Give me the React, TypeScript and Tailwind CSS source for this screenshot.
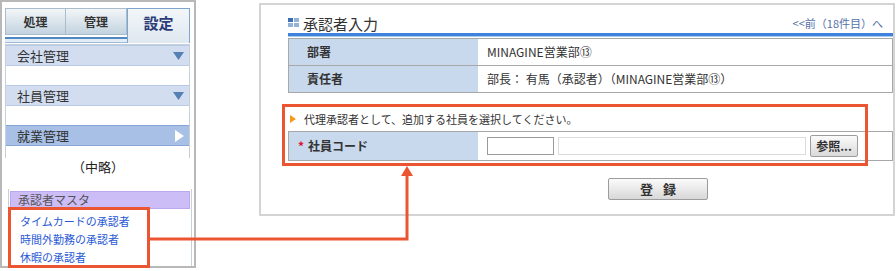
import React from "react";

const JP = { fontFamily: '"Noto Sans CJK JP", "Noto Sans", sans-serif' };

function Tri({ dir, color }: { dir: "down" | "right"; color: string }) {
  return (
    <svg width="12" height="12" viewBox="0 0 12 12" className="shrink-0">
      {dir === "down" ? (
        <polygon points="0,2 11,2 5.5,10" fill={color} />
      ) : (
        <polygon points="2,0 11,6 2,12" fill={color} />
      )}
    </svg>
  );
}

function MenuHeader({ label, active }: { label: string; active?: boolean }) {
  return (
    <div
      className={
        "h-[21px] flex items-center justify-between pl-[11px] pr-[4px] border-y " +
        (active ? "bg-[#a8c0e6] border-[#86a6d6]" : "bg-[#d2ddf0] border-[#b9cae6]")
      }
    >
      <span className="text-[13px] leading-none text-[#333]">{label}</span>
      <Tri dir={active ? "right" : "down"} color={active ? "#ffffff" : "#5580b4"} />
    </div>
  );
}

function GridIcon() {
  return (
    <svg width="11" height="10" viewBox="0 0 11 10" className="shrink-0">
      <rect x="0" y="0" width="5" height="4" fill="#3b6fb8" />
      <rect x="6" y="0" width="5" height="4" fill="#93b2d8" />
      <rect x="0" y="5" width="5" height="4" fill="#93b2d8" />
      <rect x="6" y="5" width="5" height="4" fill="#93b2d8" />
    </svg>
  );
}

export default function App() {
  return (
    <div className="relative w-[896px] h-[271px] bg-white flex items-start overflow-hidden" style={JP}>
      {/* Left panel */}
      <div className="w-[196px] h-[268px] border-2 border-[#b8b8b8] flex flex-col">
        {/* tabs */}
        <div className="ml-[3px] mt-[6px] flex items-start w-[185px]">
          <div className="flex flex-col w-[122px]">
            <div className="flex h-[27px]">
              <div className="w-[61px] border border-[#a9bccb] bg-gradient-to-b from-[#f3f6f8] to-[#c2d3df] flex items-center justify-center text-[12px] font-bold text-[#333]">
                処理
              </div>
              <div className="w-[61px] border border-l-0 border-[#a9bccb] bg-gradient-to-b from-[#f3f6f8] to-[#c2d3df] flex items-center justify-center text-[12px] font-bold text-[#333]">
                管理
              </div>
            </div>
            <div className="h-[6px] mt-[2px] border-t-2 border-b border-t-[#4f88c2] border-b-[#9dbad8] bg-[#e4edf5]" />
          </div>
          <div className="w-[63px] h-[35px] border border-b-0 border-[#7ea6cc] bg-gradient-to-b from-[#f2f6f9] to-[#dfe8f0] flex items-center justify-center pb-[6px] text-[15px] font-bold text-[#2c3c78]">
            設定
          </div>
        </div>
        {/* upper menu */}
        <div className="ml-[3px] mt-[1px] w-[185px] h-[114px] border-x border-t border-[#c6d0da] pt-[0px] flex flex-col">
          <MenuHeader label="会社管理" />
          <div className="h-[19px]" />
          <MenuHeader label="社員管理" />
          <div className="h-[19px]" />
          <MenuHeader label="就業管理" active />
        </div>
        <div className="h-[17px] flex items-center justify-center text-[13px] text-[#222]">（中略）</div>
        {/* lower menu */}
        <div className="ml-[6px] mt-[14px] w-[184px] flex-1 border-x border-[#c6d2d8] pt-[2px]">
          <div className="mx-[1px] h-[18px] bg-[#cdbdf7] border border-[#bba6f0] flex items-center pl-[7px] text-[12px] text-[#555]">
            承認者マスタ
          </div>
          <div className="pl-[11px] pt-[3px] text-[11px] leading-[18px] text-[#2a5ad6]">
            <div>タイムカードの承認者</div>
            <div>時間外勤務の承認者</div>
            <div>休暇の承認者</div>
          </div>
        </div>
      </div>

      {/* Right panel */}
      <div className="ml-[63px] mt-[3px] w-[636px] h-[213px] border-2 border-[#d4d4d4] pl-[27px] flex flex-col">
        <div className="h-[28px] pt-[8px] pr-[10px] flex items-center justify-between">
          <div className="flex items-center gap-[4px]">
            <GridIcon />
            <span className="text-[15px] leading-none text-[#333]">承認者入力</span>
          </div>
          <span className="text-[11px] leading-none text-[#5571aa]">&lt;&lt;前（18件目）へ</span>
        </div>
        <div className="h-[4px] bg-[#3f82dc] border-b border-[#a9c9f0]" />
        <div className="mt-[1px] border border-[#a8a8a8] text-[12px] text-[#333]">
          <div className="h-[27px] flex border-b border-[#a8a8a8]">
            <div className="w-[189px] bg-[#c8d9ee] flex items-center pl-[18px] font-bold">部署</div>
            <div className="flex-1 flex items-center pl-[9px]">MINAGINE営業部⑬</div>
          </div>
          <div className="h-[26px] flex">
            <div className="w-[189px] bg-[#c8d9ee] flex items-center pl-[18px] font-bold">責任者</div>
            <div className="flex-1 flex items-center pl-[9px]">部長： 有馬（承認者）（MINAGINE営業部⑬）</div>
          </div>
        </div>
        <div className="mt-[16px] h-[20px] flex items-center gap-[8px] pl-[2px] text-[11px] text-[#333]">
          <svg width="6" height="8" viewBox="0 0 6 8">
            <polygon points="0,0 6,4 0,8" fill="#f29a1a" />
          </svg>
          <span>代理承認者として、追加する社員を選択してください。</span>
        </div>
        <div className="mt-[2px] h-[30px] flex border border-[#a8a8a8] text-[12px] text-[#333]">
          <div className="w-[189px] bg-[#c8d9ee] flex items-center pl-[9px] font-bold">
            <span className="text-[#e0102a] mr-[4px]">*</span>社員コード
          </div>
          <div className="flex-1 flex items-center pl-[9px] gap-[4px]">
            <div className="w-[67px] h-[18px] border border-[#9a9a9a] bg-white" />
            <div className="w-[248px] h-[18px] border border-[#dcdcdc] bg-white" />
            <div className="w-[48px] h-[22px] border border-[#9c9c9c] rounded-[2px] bg-gradient-to-b from-[#fbfbfb] to-[#dadada] flex items-center justify-center text-[12px] font-bold text-[#333]">
              参照...
            </div>
          </div>
        </div>
        <div className="ml-[320px] mt-[17px] w-[100px] h-[22px] border border-[#9c9c9c] rounded-[2px] bg-gradient-to-b from-[#fbfbfb] to-[#d8d8d8] flex items-center justify-center text-[13px] font-bold text-[#333] tracking-[10px] pl-[10px]">
          登録
        </div>
      </div>

      {/* Annotation overlay */}
      <svg className="absolute left-0 top-0 pointer-events-none" width="896" height="271" viewBox="0 0 896 271">
        <rect x="9.5" y="208.5" width="139" height="58" fill="none" stroke="#ec5532" strokeWidth="3" />
        <rect x="283.5" y="105.5" width="583" height="59" fill="none" stroke="#ec5532" strokeWidth="3" />
        <polyline points="150,239 407,239 407,174" fill="none" stroke="#ec5532" strokeWidth="3" />
        <polygon points="401,176 413,176 407,166" fill="#ec5532" />
      </svg>
    </div>
  );
}
